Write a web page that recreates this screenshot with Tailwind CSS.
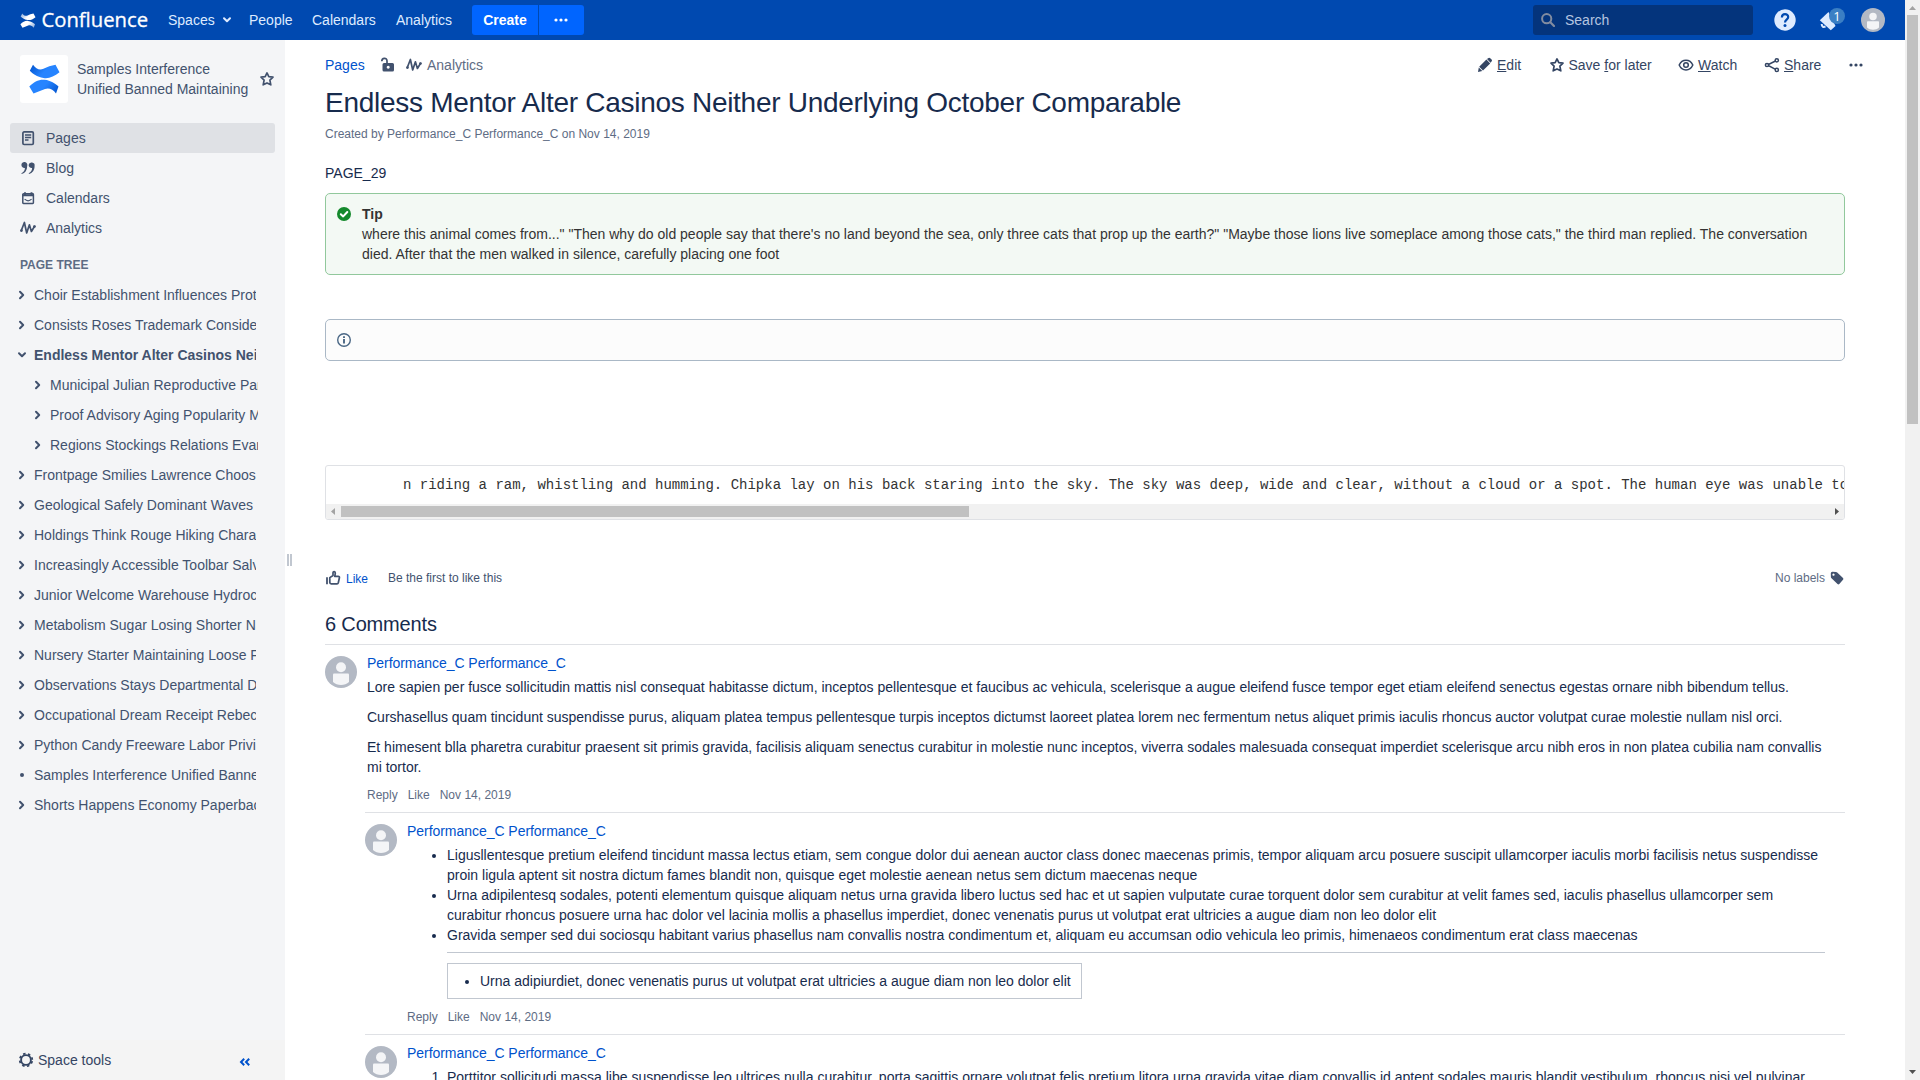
<!DOCTYPE html>
<html lang="en">
<head>
<meta charset="utf-8">
<title>Endless Mentor Alter Casinos Neither Underlying October Comparable - Confluence</title>
<script src="https://cdn.jsdelivr.net/npm/@tailwindcss/browser@4"></script>
</head>
<body class="h-[1080px] w-[1920px] overflow-hidden bg-white font-['Liberation_Sans',Arial,sans-serif] text-[14px] leading-5 text-[#172b4d]">
<svg class="absolute h-0 w-0" aria-hidden="true">
  <defs>
  <linearGradient id="ga" x1="0" y1="0" x2="1" y2="0.4"><stop offset="0" stop-color="#0052cc"/><stop offset="0.6" stop-color="#2684ff"/></linearGradient>
  <linearGradient id="gb" x1="1" y1="1" x2="0" y2="0.6"><stop offset="0" stop-color="#0052cc"/><stop offset="0.6" stop-color="#2684ff"/></linearGradient>
  <linearGradient id="wa" x1="0" y1="0" x2="1" y2="0.4"><stop offset="0" stop-color="#fff" stop-opacity=".5"/><stop offset="0.6" stop-color="#fff"/></linearGradient>
  <linearGradient id="wb" x1="1" y1="1" x2="0" y2="0.6"><stop offset="0" stop-color="#fff" stop-opacity=".5"/><stop offset="0.6" stop-color="#fff"/></linearGradient>
  </defs>
  <symbol id="chev" viewBox="0 0 8 10"><path d="M2 1.800 5.200 5 2 8.200" fill="none" stroke="currentColor" stroke-width="2" stroke-linecap="round" stroke-linejoin="round"/></symbol>
  <symbol id="chevd" viewBox="0 0 10 8"><path d="M2 2.300 5 5.300 8 2.300" fill="none" stroke="currentColor" stroke-width="2" stroke-linecap="round" stroke-linejoin="round"/></symbol>
  <symbol id="star" viewBox="0 0 16 16"><path d="M8 1.900l1.800 3.800 4.200.5-3.100 2.900.9 4.700L8 11.900l-3.800 1.900.9-4.700L2 6.200l4.200-.5z" fill="none" stroke="currentColor" stroke-width="1.700" stroke-linejoin="round"/></symbol>
  <symbol id="wave" viewBox="0 0 16 14"><path d="M1.200 9.700 4.400 1.500 6.700 12 9.400 3.800 11.400 10.500 14.600 5.300" fill="none" stroke="currentColor" stroke-width="1.700" stroke-linecap="round" stroke-linejoin="round"/><circle cx="1.500" cy="9.600" r="1.300" fill="currentColor"/><circle cx="14.400" cy="5.600" r="1.400" fill="currentColor"/></symbol>
  <symbol id="avatar" viewBox="0 0 32 32"><circle cx="16" cy="16" r="16" fill="#b3b9c4"/><circle cx="16" cy="11.300" r="5" fill="#f4f5f7"/><path d="M8 18.500a1 1 0 0 1 1-1h14a1 1 0 0 1 1 1v7.500c-4 4-12 4-16 0z" fill="#f4f5f7"/></symbol>
  <symbol id="dots" viewBox="0 0 14 4"><circle cx="2" cy="2" r="1.600" fill="currentColor"/><circle cx="7" cy="2" r="1.600" fill="currentColor"/><circle cx="12" cy="2" r="1.600" fill="currentColor"/></symbol>
</svg>

<div class="flex h-full">
  <div class="flex w-[1905px] flex-col">
    <header class="flex h-10 shrink-0 items-center bg-[#0049b0] pl-5 text-[#deebff]">
      <svg class="mr-1.5 h-[15px] w-4" viewBox="0 0 31 30"><path d="M4 .8C7 5 10.500 6.500 14.500 4.800Q20 2 26.500.8L30.500 8.300C25 12.500 20 15 14.500 14 8 13 3.500 9.500.8 6.800z" fill="url(#wa)"/><path d="M27 29.500c-3-4.500-7.500-6-11-4.500L4.500 29.500.3 22.500C5 18 9.500 15.300 15.500 15.800 22 16.500 26 19.500 29.500 22.500z" fill="url(#wb)"/></svg>
      <svg class="h-8 w-[108px]" viewBox="0 0 108 32"><text x="-.5" y="22.500" textLength="106.500" lengthAdjust="spacingAndGlyphs" fill="#fff" stroke="#fff" stroke-width=".3" font-family="Open Sans" font-size="20">Confluence</text></svg>
      <span class="ml-[18px] w-[54px]">Spaces</span>
      <svg class="h-2 w-2.5 text-[#deebff]"><use href="#chevd"/></svg>
      <span class="ml-[17px] w-[63px]">People</span>
      <span class="w-[84px]">Calendars</span>
      <span class="w-[76px]">Analytics</span>
      <div class="flex h-[30px] w-[66px] items-center justify-center rounded-l-[3px] bg-[#0065ff] font-bold text-white">Create</div>
      <div class="ml-px flex h-[30px] w-[45px] items-center justify-center rounded-r-[3px] bg-[#0065ff] pr-[2px] text-white"><svg class="h-1 w-3.5"><use href="#dots"/></svg></div>
      <div class="ml-auto flex h-[30px] w-[220px] items-center gap-[10px] rounded-[3px] bg-[#04347c] pl-2 text-[#b5c5e0]">
        <svg class="h-3.5 w-3.5" viewBox="0 0 14 14"><circle cx="5.700" cy="5.700" r="4.600" fill="none" stroke="#828ca0" stroke-width="2"/><path d="M9.300 9.300 13 13" stroke="#828ca0" stroke-width="2.200" stroke-linecap="round"/></svg>
        Search
      </div>
      <svg class="ml-[21px] h-[22px] w-[22px]" viewBox="0 0 22 22"><circle cx="11" cy="11" r="10.700" fill="#deebff"/><path d="M7.900 8.400C7.900 4 14.200 4.200 14.200 8c0 2.600-3.200 2.700-3.200 5.500" fill="none" stroke="#0049b0" stroke-width="2.200"/><circle cx="11" cy="16.600" r="1.500" fill="#0049b0"/></svg>
      <div class="relative ml-[23px] h-5 w-[27px]">
        <svg class="h-[22px] w-[20px]" viewBox="0 0 20 22"><path d="M.8 10.300 9.500 2 16.500 16 11.800 20.300z" fill="#deebff"/><path d="M2.700 14c0 2.500 1.500 3.500 3.800 2.500" fill="none" stroke="#deebff" stroke-width="2"/></svg>
        <span class="absolute -top-[2px] left-[10px] flex h-4 w-4 items-center justify-center rounded-full bg-[#3b7fc4] font-['Open_Sans',sans-serif] text-[13px] leading-4 text-white">1</span>
      </div>
      <svg class="mr-5 ml-[15px] h-6 w-6"><use href="#avatar"/></svg>
    </header>

    <div class="flex min-h-0 grow">
      <aside class="flex w-[285px] shrink-0 flex-col bg-[#f4f5f7] text-[#42526e]">
        <div class="mt-[15px] ml-5 flex h-12 items-center">
          <div class="flex h-12 w-12 items-center justify-center rounded-[3px] bg-white"><svg class="h-[30px] w-[31px]" viewBox="0 0 31 30"><path d="M4 .8C7 5 10.500 6.500 14.500 4.800Q20 2 26.500.8L30.500 8.300C25 12.500 20 15 14.500 14 8 13 3.500 9.500.8 6.800z" fill="url(#ga)"/><path d="M27 29.500c-3-4.500-7.500-6-11-4.500L4.500 29.500.3 22.500C5 18 9.500 15.300 15.500 15.800 22 16.500 26 19.500 29.500 22.500z" fill="url(#gb)"/></svg></div>
          <div class="ml-[9px] w-[182px] whitespace-nowrap">Samples Interference<br>Unified Banned Maintaining</div>
          <svg class="h-4 w-4"><use href="#star"/></svg>
        </div>
        <nav class="mt-5 ml-2.5 w-[265px]">
          <div class="flex h-[30px] items-center gap-[10px] rounded-[3px] bg-[#dfe1e5] pl-[10px]"><svg class="h-4 w-4" viewBox="0 0 16 16"><rect x="2.900" y="1.900" width="10.400" height="12.600" rx="1.200" fill="none" stroke="currentColor" stroke-width="1.700"/><path d="M5 5h6.200M5 7.500h6.200M5 10h3.500" stroke="currentColor" stroke-width="1.300"/></svg>Pages</div>
          <div class="flex h-[30px] items-center gap-[10px] pl-[10px]"><svg class="h-4 w-4" viewBox="0 0 16 16"><path d="M1.400 5.100A3 3 0 1 1 7.200 6C7.200 10 5.300 13 1.700 14.100L1.400 13.200C3.800 12 5 10 4.900 8A3 3 0 0 1 1.400 5.100zM8.600 5.100A3 3 0 1 1 14.600 6C14.600 10 12.600 13 9 14.100L8.700 13.200C11 12 12.200 10 12.100 8A3 3 0 0 1 8.600 5.100z" fill="currentColor"/></svg>Blog</div>
          <div class="flex h-[30px] items-center gap-[10px] pl-[10px]"><svg class="h-4 w-4" viewBox="0 0 16 16"><rect x="2.800" y="3.800" width="10.600" height="9.600" rx=".7" fill="none" stroke="currentColor" stroke-width="1.500"/><path d="M2.300 5.200h11.500M5 2.200v2.500M11.500 2.200v2.500" stroke="currentColor" stroke-width="1.900"/><path d="M4.600 9.200q3.500 3.300 7 0" fill="none" stroke="currentColor" stroke-width="1.100"/></svg>Calendars</div>
          <div class="flex h-[30px] items-center gap-[10px] pl-[10px]"><svg class="h-3.5 w-4"><use href="#wave"/></svg>Analytics</div>
        </nav>
        <div class="mt-3 h-5 pl-5 text-[12px] font-bold text-[#5e6c84]">PAGE TREE</div>
        <div class="mt-[5px] flex flex-col pl-[18px] whitespace-nowrap">
          <div class="flex h-[30px] items-center"><svg class="mr-2 h-2.5 w-2"><use href="#chev"/></svg><span class="w-[222px] overflow-hidden">Choir Establishment Influences Protein</span></div>
          <div class="flex h-[30px] items-center"><svg class="mr-2 h-2.5 w-2"><use href="#chev"/></svg><span class="w-[222px] overflow-hidden">Consists Roses Trademark Considered</span></div>
          <div class="flex h-[30px] items-center font-bold"><svg class="-ml-px mr-[7px] h-2 w-2.5"><use href="#chevd"/></svg><span class="w-[222px] overflow-hidden">Endless Mentor Alter Casinos Neither</span></div>
          <div class="flex h-[30px] items-center pl-4"><svg class="mr-2 h-2.5 w-2"><use href="#chev"/></svg><span class="w-[208px] overflow-hidden">Municipal Julian Reproductive Parallel</span></div>
          <div class="flex h-[30px] items-center pl-4"><svg class="mr-2 h-2.5 w-2"><use href="#chev"/></svg><span class="w-[208px] overflow-hidden">Proof Advisory Aging Popularity Maps</span></div>
          <div class="flex h-[30px] items-center pl-4"><svg class="mr-2 h-2.5 w-2"><use href="#chev"/></svg><span class="w-[208px] overflow-hidden">Regions Stockings Relations Evans</span></div>
          <div class="flex h-[30px] items-center"><svg class="mr-2 h-2.5 w-2"><use href="#chev"/></svg><span class="w-[222px] overflow-hidden">Frontpage Smilies Lawrence Choosing</span></div>
          <div class="flex h-[30px] items-center"><svg class="mr-2 h-2.5 w-2"><use href="#chev"/></svg><span class="w-[222px] overflow-hidden">Geological Safely Dominant Waves</span></div>
          <div class="flex h-[30px] items-center"><svg class="mr-2 h-2.5 w-2"><use href="#chev"/></svg><span class="w-[222px] overflow-hidden">Holdings Think Rouge Hiking Character</span></div>
          <div class="flex h-[30px] items-center"><svg class="mr-2 h-2.5 w-2"><use href="#chev"/></svg><span class="w-[222px] overflow-hidden">Increasingly Accessible Toolbar Salvation</span></div>
          <div class="flex h-[30px] items-center"><svg class="mr-2 h-2.5 w-2"><use href="#chev"/></svg><span class="w-[222px] overflow-hidden">Junior Welcome Warehouse Hydrocodone</span></div>
          <div class="flex h-[30px] items-center"><svg class="mr-2 h-2.5 w-2"><use href="#chev"/></svg><span class="w-[222px] overflow-hidden">Metabolism Sugar Losing Shorter Nail</span></div>
          <div class="flex h-[30px] items-center"><svg class="mr-2 h-2.5 w-2"><use href="#chev"/></svg><span class="w-[222px] overflow-hidden">Nursery Starter Maintaining Loose Forum</span></div>
          <div class="flex h-[30px] items-center"><svg class="mr-2 h-2.5 w-2"><use href="#chev"/></svg><span class="w-[222px] overflow-hidden">Observations Stays Departmental Dust</span></div>
          <div class="flex h-[30px] items-center"><svg class="mr-2 h-2.5 w-2"><use href="#chev"/></svg><span class="w-[222px] overflow-hidden">Occupational Dream Receipt Rebecca</span></div>
          <div class="flex h-[30px] items-center"><svg class="mr-2 h-2.5 w-2"><use href="#chev"/></svg><span class="w-[222px] overflow-hidden">Python Candy Freeware Labor Privilege</span></div>
          <div class="flex h-[30px] items-center"><span class="mr-[10px] ml-[2px] h-1 w-1 rounded-full bg-[#42526e]"></span><span class="w-[222px] overflow-hidden">Samples Interference Unified Banned</span></div>
          <div class="flex h-[30px] items-center"><svg class="mr-2 h-2.5 w-2"><use href="#chev"/></svg><span class="w-[222px] overflow-hidden">Shorts Happens Economy Paperback</span></div>
        </div>
        <div class="mt-auto flex h-10 items-center bg-[#f4f4f4] pl-[18px]">
          <svg class="h-4 w-4" viewBox="0 0 16 16"><circle cx="8" cy="8" r="4.900" fill="none" stroke="#344563" stroke-width="1.900"/><circle cx="8" cy="8" r="6.300" fill="none" stroke="#344563" stroke-width="1.700" stroke-dasharray="2.470 2.478" stroke-dashoffset="-1.240"/></svg>
          <span class="ml-1 text-[#344563]">Space tools</span>
          <svg class="mt-1 ml-auto mr-[34px] h-[10px] w-[12px]" viewBox="0 0 12 10"><path d="M5.200 1.700 2 5l3.200 3.300M10.200 1.700 7 5l3.200 3.300" fill="none" stroke="#0052cc" stroke-width="2"/></svg>
        </div>
      </aside>
      <div class="flex w-10 shrink-0 gap-px pt-[514px] pl-[2px]"><div class="h-3 w-[2px] bg-[#c1c7d0]"></div><div class="h-3 w-[2px] bg-[#c1c7d0]"></div></div>

      <main class="w-[1520px] shrink-0">
        <div class="mt-[15px] flex h-5 items-center">
          <span class="w-[55px] text-[#0052cc]">Pages</span>
          <svg class="h-4 w-4 text-[#42526e]" viewBox="0 0 16 16"><path d="M1.800 4.200C1.800.6 7 .3 7 4v3" fill="none" stroke="currentColor" stroke-width="1.700"/><path fill-rule="evenodd" d="M4 6h8.500a1.500 1.500 0 0 1 1.500 1.500v5.500a1.500 1.500 0 0 1-1.500 1.500H4A1.500 1.500 0 0 1 2.500 13V7.500A1.500 1.500 0 0 1 4 6zm4.200 2.700a1.500 1.500 0 1 0 .01 0z" fill="currentColor"/></svg>
          <svg class="ml-[10px] h-3.5 w-4 text-[#42526e]"><use href="#wave"/></svg>
          <span class="ml-[5px] text-[#5e6c84]">Analytics</span>
          <div class="-mr-[18px] ml-auto flex items-center text-[#344563]">
            <svg class="mr-1 h-4 w-4" viewBox="0 0 16 16"><path d="M10 2 11.600 1q.9-.5 1.600.2l1.400 1.400q.8.800.1 1.600L13.500 5.800zM9.400 2.600l3.800 3.800-7.200 7.200L2.200 9.800zM1.800 10.500 5.300 14 1 15z" fill="currentColor"/></svg><span class="w-[51.500px]"><u>E</u>dit</span>
            <svg class="mr-1 h-4 w-4"><use href="#star"/></svg><span class="w-[109.500px] whitespace-nowrap">Save <u>f</u>or later</span>
            <svg class="mr-1 h-4 w-4" viewBox="0 0 16 16"><path d="M1.200 8C4 1.500 12 1.500 14.800 8 12 14.500 4 14.500 1.200 8z" fill="none" stroke="currentColor" stroke-width="1.500"/><circle cx="8" cy="8" r="2.300" fill="none" stroke="currentColor" stroke-width="1.500"/></svg><span class="w-[66px]"><u>W</u>atch</span>
            <svg class="mr-1 h-4 w-4" viewBox="0 0 16 16"><path d="M12.500 3.500 3.300 8l9.200 4.800" fill="none" stroke="currentColor" stroke-width="1.500"/><g fill="#fff" stroke="currentColor" stroke-width="1.500"><circle cx="12.800" cy="3.300" r="1.600"/><circle cx="3" cy="8" r="1.600"/><circle cx="12.800" cy="12.900" r="1.600"/></g></svg><span class="w-[65px]"><u>S</u>hare</span>
            <svg class="h-1 w-3.5"><use href="#dots"/></svg>
          </div>
        </div>
        <h1 class="mt-3 h-8 text-[28px] leading-8 tracking-[-0.28px] whitespace-nowrap">Endless Mentor Alter Casinos Neither Underlying October Comparable</h1>
        <p class="mt-[5px] text-[12px] text-[#5e6c84]">Created by Performance_C Performance_C on Nov 14, 2019</p>
        <p class="mt-[19px]">PAGE_29</p>
        <section class="mt-[10px] flex h-[82px] rounded-[5px] border border-[#91c89c] bg-[#f3f9f4] py-[10px] pl-[11px] text-[#333]">
          <svg class="mt-[3px] mr-[11px] h-3.5 w-3.5" viewBox="0 0 14 14"><circle cx="7" cy="7" r="7" fill="#14892c"/><path d="M3.800 7.200 6.200 9.400 10.300 5" fill="none" stroke="#fff" stroke-width="2" stroke-linecap="round" stroke-linejoin="round"/></svg>
          <div class="whitespace-nowrap"><b>Tip</b><br>where this animal comes from..." "Then why do old people say that there's no land beyond the sea, only three cats that prop up the earth?" "Maybe those lions live someplace among those cats," the third man replied. The conversation<br>died. After that the men walked in silence, carefully placing one foot</div>
        </section>
        <section class="mt-11 h-[42px] rounded-[5px] border border-[#aab8c6] bg-[#fcfcfc] pt-[13px] pl-[11px]">
          <svg class="h-3.5 w-3.5" viewBox="0 0 14 14"><circle cx="7" cy="7" r="6.300" fill="none" stroke="#4a6785" stroke-width="1.400"/><path d="M7 6v4.600M7 3.200v1.700" stroke="#4a6785" stroke-width="1.900"/></svg>
        </section>
        <section class="mt-[104px] h-[55px] overflow-hidden rounded-[3px] border border-[#dfe1e5]">
          <div class="h-[38px] overflow-hidden pt-[9px] pl-[77px] font-['Liberation_Mono',monospace] leading-5 whitespace-nowrap text-[#333]">n riding a ram, whistling and humming. Chipka lay on his back staring into the sky. The sky was deep, wide and clear, without a cloud or a spot. The human eye was unable to</div>
          <div class="flex h-[15px] items-center bg-[#f1f1f1]">
            <svg class="h-[15px] w-[15px]" viewBox="0 0 15 15"><path d="M9 4v7L5 7.500z" fill="#a3a3a3"/></svg>
            <div class="h-[11px] w-[628px] bg-[#c1c1c1]"></div>
            <svg class="ml-auto h-[15px] w-[15px]" viewBox="0 0 15 15"><path d="M6 4v7l4-3.500z" fill="#505050"/></svg>
          </div>
        </section>
        <div class="mt-[48px] flex h-5 items-center text-[12px]">
          <svg class="h-4 w-4" viewBox="0 0 16 16"><path d="M2 7.300v7" stroke="#42526e" stroke-width="1.800"/><path d="M4.800 7.600 8 5.500V3c0-2 2.400-1.800 2.300.2L9.800 6.300h3.400c1 0 1.400.7 1.200 1.500l-1.100 5c-.2.700-.6 1-1.300 1H6.200c-.9 0-1.400-.4-1.400-1.300z" fill="none" stroke="#42526e" stroke-width="1.700" stroke-linejoin="round"/></svg>
          <span class="mt-[2px] ml-[5px] w-[42px] text-[#0052cc]">Like</span>
          <span class="text-[#42526e]">Be the first to like this</span>
          <span class="ml-auto text-[#5e6c84]">No labels</span>
          <svg class="mr-px ml-[5px] h-3.5 w-3.5" viewBox="0 0 14 14"><path fill-rule="evenodd" d="M.8 2.300Q.8.800 2.300.8L6 1q.7 0 1.200.5L13 7q.9.900 0 1.800L9.300 13q-.9.800-1.800 0L1.500 7.300Q1 6.900.9 6.200zM3.500 2.500a1.100 1.100 0 1 0 .01 0z" fill="#42526e"/></svg>
        </div>
        <h2 class="mt-[24px] h-[33px] border-b border-[#dfe1e5] text-[20px] leading-[24px] tracking-[-0.16px]">6 Comments</h2>

        <article class="mt-[11px] flex h-[156px]">
          <svg class="h-8 w-8"><use href="#avatar"/></svg>
          <div class="ml-[10px] -mt-[3px] whitespace-nowrap">
            <p class="tracking-[-0.042px] text-[#0052cc]">Performance_C Performance_C</p>
            <p class="mt-1">Lore sapien per fusce sollicitudin mattis nisl consequat habitasse dictum, inceptos pellentesque et faucibus ac vehicula, scelerisque a augue eleifend fusce tempor eget etiam eleifend senectus egestas ornare nibh bibendum tellus.</p>
            <p class="mt-[10px]">Curshasellus quam tincidunt suspendisse purus, aliquam platea tempus pellentesque turpis inceptos dictumst laoreet platea lorem nec fermentum netus aliquet primis iaculis rhoncus auctor volutpat curae molestie nullam nisl orci.</p>
            <p class="mt-[10px]">Et himesent blla pharetra curabitur praesent sit primis gravida, facilisis aliquam senectus curabitur in molestie nunc inceptos, viverra sodales malesuada consequat imperdiet scelerisque arcu nibh eros in non platea cubilia nam convallis<br>mi tortor.</p>
            <p class="mt-[8px] flex gap-[10px] text-[12px] text-[#5e6c84]"><span>Reply</span><span>Like</span><span>Nov 14, 2019</span></p>
          </div>
        </article>

        <article class="ml-10 flex h-[222px] border-t border-[#dfe1e5] pt-[11px]">
          <svg class="h-8 w-8"><use href="#avatar"/></svg>
          <div class="ml-[10px] -mt-[3px] w-[1418px] whitespace-nowrap">
            <p class="tracking-[-0.042px] text-[#0052cc]">Performance_C Performance_C</p>
            <ul class="mt-1 list-disc pl-10">
              <li>Ligusllentesque pretium eleifend tincidunt massa lectus etiam, sem congue dolor dui aenean auctor class donec maecenas primis, tempor aliquam arcu posuere suscipit ullamcorper iaculis morbi facilisis netus suspendisse<br>proin ligula aptent sit nostra dictum fames blandit non, quisque eget molestie aenean netus sem dictum maecenas neque</li>
              <li>Urna adipilentesq sodales, potenti elementum quisque aliquam netus urna gravida libero luctus sed hac et ut sapien vulputate curae torquent dolor sem curabitur at velit fames sed, iaculis phasellus ullamcorper sem<br>curabitur rhoncus posuere urna hac dolor vel lacinia mollis a phasellus imperdiet, donec venenatis purus ut volutpat erat ultricies a augue diam non leo dolor elit</li>
              <li>Gravida semper sed dui sociosqu habitant varius phasellus nam convallis nostra condimentum et, aliquam eu accumsan odio vehicula leo primis, himenaeos condimentum erat class maecenas</li>
            </ul>
            <div class="mt-[7px] ml-10 border-t border-[#c1c7d0]"></div>
            <div class="mt-[10px] ml-10 h-9 w-[635px] border border-[#c1c7d0] pt-[7px] pl-8"><ul class="list-disc"><li>Urna adipiurdiet, donec venenatis purus ut volutpat erat ultricies a augue diam non leo dolor elit</li></ul></div>
            <p class="mt-[8px] flex gap-[10px] text-[12px] text-[#5e6c84]"><span>Reply</span><span>Like</span><span>Nov 14, 2019</span></p>
          </div>
        </article>

        <article class="ml-10 flex border-t border-[#dfe1e5] pt-[11px]">
          <svg class="h-8 w-8"><use href="#avatar"/></svg>
          <div class="ml-[10px] -mt-[3px] whitespace-nowrap">
            <p class="tracking-[-0.042px] text-[#0052cc]">Performance_C Performance_C</p>
            <ol class="mt-1 list-decimal pl-10"><li>Porttitor sollicitudi massa libe suspendisse leo ultrices nulla curabitur, porta sagittis ornare volutpat felis pretium litora urna gravida vitae diam convallis id aptent sodales mauris blandit vestibulum, rhoncus nisi vel pulvinar</li></ol>
          </div>
        </article>
      </main>
    </div>
  </div>

  <div class="flex w-[15px] flex-col items-center bg-[#f1f1f1]">
    <svg class="h-[15px] w-[15px]" viewBox="0 0 15 15"><path d="M4 10h7L7.500 6z" fill="#a3a3a3"/></svg>
    <div class="h-[409px] w-[11px] bg-[#c1c1c1]"></div>
    <svg class="mt-auto h-[15px] w-[15px]" viewBox="0 0 15 15"><path d="M4 5h7L7.500 9z" fill="#505050"/></svg>
  </div>
</div>
</body>
</html>
